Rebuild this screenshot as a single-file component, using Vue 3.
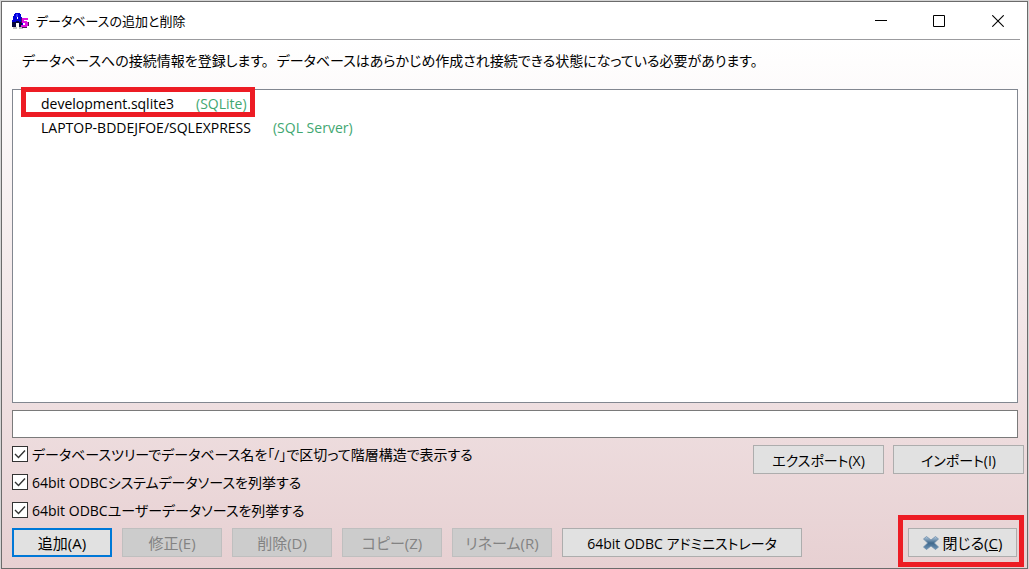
<script setup>
import { ref } from 'vue';

const databases = ref([
  { name: 'development.sqlite3', type: 'SQLite', marked: true },
  { name: 'LAPTOP-BDDEJFOE/SQLEXPRESS', type: 'SQL Server', marked: false }
]);

const options = ref([
  { id: 'tree', label: 'データベースツリーでデータベース名を「/」で区切って階層構造で表示する', checked: true },
  { id: 'system', label: '64bit ODBCシステムデータソースを列挙する', checked: true },
  { id: 'user', label: '64bit ODBCユーザーデータソースを列挙する', checked: true }
]);

const actions = [
  { label: '追加(A)', disabled: false },
  { label: '修正(E)', disabled: true },
  { label: '削除(D)', disabled: true },
  { label: 'コピー(Z)', disabled: true },
  { label: 'リネーム(R)', disabled: true }
];

const connection = ref('');
</script>

<template>
  <div class="desktop">
    <div class="window">
      <header class="title-bar">
        <svg class="app-icon" width="17" height="18" viewBox="0 0 17 18" shape-rendering="crispEdges">
          <path d="M1 14h4v2H1zM7 14h4v2H7z" fill="#c0c0c4" />
          <path d="M3 0h5v1h1v3h1v4h1v6H7v-4H4v4H0V7h1V3h1V1h1z" fill="#0000d8" />
          <path d="M0 9h4v5H0zM7 9h3v5H7zM4 8h3v2H4z" fill="#06063c" />
          <path d="M4 1h2v3H4z" fill="#2c2cff" />
          <path d="M5 4h1v2H5z" fill="#fff" />
          <path d="M10 5h6v2h-4v1h3v1h1v4h-1v1h-6v-2h4v-2h-3z" fill="#e010e0" />
          <path d="M10 14h5v1h-5zM16 9h1v4h-1zM9 5h1v5H9z" fill="#50105c" />
        </svg>
        <h1>データベースの追加と削除</h1>
        <div class="window-buttons">
          <button type="button" aria-label="最小化">
            <svg width="12" height="12" viewBox="0 0 12 12" shape-rendering="crispEdges"><path d="M0 5h12v1H0z" /></svg>
          </button>
          <button type="button" aria-label="最大化">
            <svg width="12" height="12" viewBox="0 0 12 12"><path d="M.5.5h11v11H.5z" fill="none" stroke="#000" /></svg>
          </button>
          <button type="button" aria-label="閉じる">
            <svg width="12" height="12" viewBox="0 0 12 12"><path d="M.3.3l11.4 11.4M11.7.3L.3 11.7" fill="none" stroke="#000" stroke-width="1.1" /></svg>
          </button>
        </div>
      </header>

      <main>
        <p class="description">
          <span>データベースへの接続情報を登録します。</span>
          <span>データベースはあらかじめ作成され接続できる状態になっている必要があります。</span>
        </p>

        <ul class="database-list">
          <li v-for="db in databases" :key="db.name" :class="{ marked: db.marked }">
            <span>{{ db.name }}</span>
            <span class="type">({{ db.type }})</span>
          </li>
        </ul>

        <input v-model="connection" class="connection" type="text" aria-label="接続情報">

        <div class="settings">
          <div class="options">
            <label v-for="option in options" :key="option.id" :for="option.id">
              <input :id="option.id" v-model="option.checked" type="checkbox">
              <span>{{ option.label }}</span>
            </label>
          </div>
          <div class="transfer">
            <button type="button" class="btn">エクスポート(X)</button>
            <button type="button" class="btn">インポート(I)</button>
          </div>
        </div>

        <footer>
          <button
            v-for="(action, i) in actions"
            :key="action.label"
            type="button"
            class="btn action"
            :class="{ primary: i === 0 }"
            :disabled="action.disabled"
          >{{ action.label }}</button>
          <button type="button" class="btn odbc">64bit ODBC アドミニストレータ</button>
          <div class="close-area">
            <button type="button" class="btn close">
              <svg width="16" height="14" viewBox="0 0 16 14">
                <defs>
                  <linearGradient id="cross" x1="0" y1="0" x2="0" y2="1">
                    <stop offset="0" stop-color="#b4cbdf" />
                    <stop offset=".5" stop-color="#41698c" />
                    <stop offset="1" stop-color="#6c93b5" />
                  </linearGradient>
                </defs>
                <path d="M3.5.5L8 4 12.5.5 15.5 3 11.3 7l4.2 4-3 2.5L8 10l-4.5 3.5-3-2.5 4.2-4L.5 3z" fill="url(#cross)" stroke="#6d8dab" stroke-width=".8" />
              </svg>
              <span>閉じる(<u>C</u>)</span>
            </button>
          </div>
        </footer>
      </main>
    </div>
  </div>
</template>

<style>
body {
  margin: 0;
}
</style>

<style scoped>
.desktop {
  box-sizing: border-box;
  min-height: 100vh;
  padding: 1px 1px 0;
  display: flex;
  background: #d4d4d4;
  color: #000;
  font-family: "Open Sans", "Noto Sans CJK JP", sans-serif;
  font-size: 14px;
  font-feature-settings: "palt";
}

.window {
  flex: 1;
  min-width: 0;
  display: flex;
  flex-direction: column;
  border: 1px solid #6b6b6b;
  background: linear-gradient(#fff 0, #fff 38px, #e7d0d2 100%);
}

.title-bar {
  display: flex;
  align-items: center;
  height: 37px;
  margin: 0 7px 0 8px;
  border-bottom: 1px solid #9b9b9e;
}

.app-icon {
  margin: 2px 7px 0 2px;
}

h1 {
  margin: 0;
  font-size: 13px;
  font-weight: 400;
  line-height: 20px;
}

.window-buttons {
  display: flex;
  margin-left: auto;
}

.window-buttons button {
  width: 58px;
  height: 36px;
  padding: 0;
  display: flex;
  align-items: center;
  justify-content: center;
  border: none;
  background: transparent;
}

.window-buttons button:last-child {
  width: 44px;
  margin-left: 8px;
}

main {
  flex: 1;
  display: flex;
  flex-direction: column;
  padding: 0 9px 11px 10px;
}

.description {
  display: flex;
  gap: 8px;
  margin: 10px 10px 18px;
  line-height: 21px;
}

.database-list {
  flex: 1;
  margin: 0;
  padding: 2px 8px;
  list-style: none;
  border: 1px solid #828790;
  background: #fff;
}

.database-list li {
  position: relative;
  width: fit-content;
  padding: 0 8px 0 20px;
  display: flex;
  gap: 22px;
  line-height: 24px;
}

.marked::after {
  content: "";
  position: absolute;
  inset: -5px 0 -1px 0;
  border: 5px solid #ed1c24;
}

.type {
  color: #3fa771;
}

.connection {
  box-sizing: border-box;
  width: 100%;
  height: 28px;
  margin: 7px 0;
  padding: 0 6px;
  border: 1px solid #7a7a7a;
  background: #fff;
  font: inherit;
}

.settings {
  display: flex;
  justify-content: space-between;
  margin-bottom: -1px;
}

.options label {
  display: flex;
  align-items: center;
  gap: 4px;
  height: 28px;
  margin-top: -5px;
  margin-bottom: 5px;
}

.options input {
  appearance: none;
  width: 16px;
  height: 16px;
  margin: 0;
  border: 1px solid #333;
  background: #fff;
}

.options input:checked {
  background: #fff url("data:image/svg+xml,%3Csvg xmlns='http://www.w3.org/2000/svg' viewBox='0 0 14 14'%3E%3Cpath d='M2 7l3.5 3.5L12 3.5' fill='none' stroke='%23333' stroke-width='1.4'/%3E%3C/svg%3E");
}

.transfer {
  display: flex;
  gap: 9px;
  margin-right: -6px;
}

.btn {
  box-sizing: border-box;
  height: 29px;
  padding: 0;
  border: 1px solid #adadad;
  background: #e1e1e1;
  color: #000;
  font: inherit;
  font-feature-settings: "palt";
}

.transfer .btn {
  width: 131px;
}

.btn:disabled {
  border-color: #bfbfbf;
  background: #ccc;
  color: #838383;
}

.btn.primary {
  border: 2px solid #0078d7;
}

footer {
  display: flex;
  gap: 10px;
}

.action {
  width: 100px;
  font-size: 15px;
}

.odbc {
  width: 240px;
}

.close-area {
  position: relative;
  margin-left: auto;
  margin-right: 1px;
}

.close-area::after {
  content: "";
  position: absolute;
  inset: -13px -7px -10px -10px;
  border: 5px solid #ed1c24;
  pointer-events: none;
}

.close {
  width: 109px;
  display: flex;
  align-items: center;
  justify-content: center;
  gap: 4px;
  font-size: 15px;
}
</style>
